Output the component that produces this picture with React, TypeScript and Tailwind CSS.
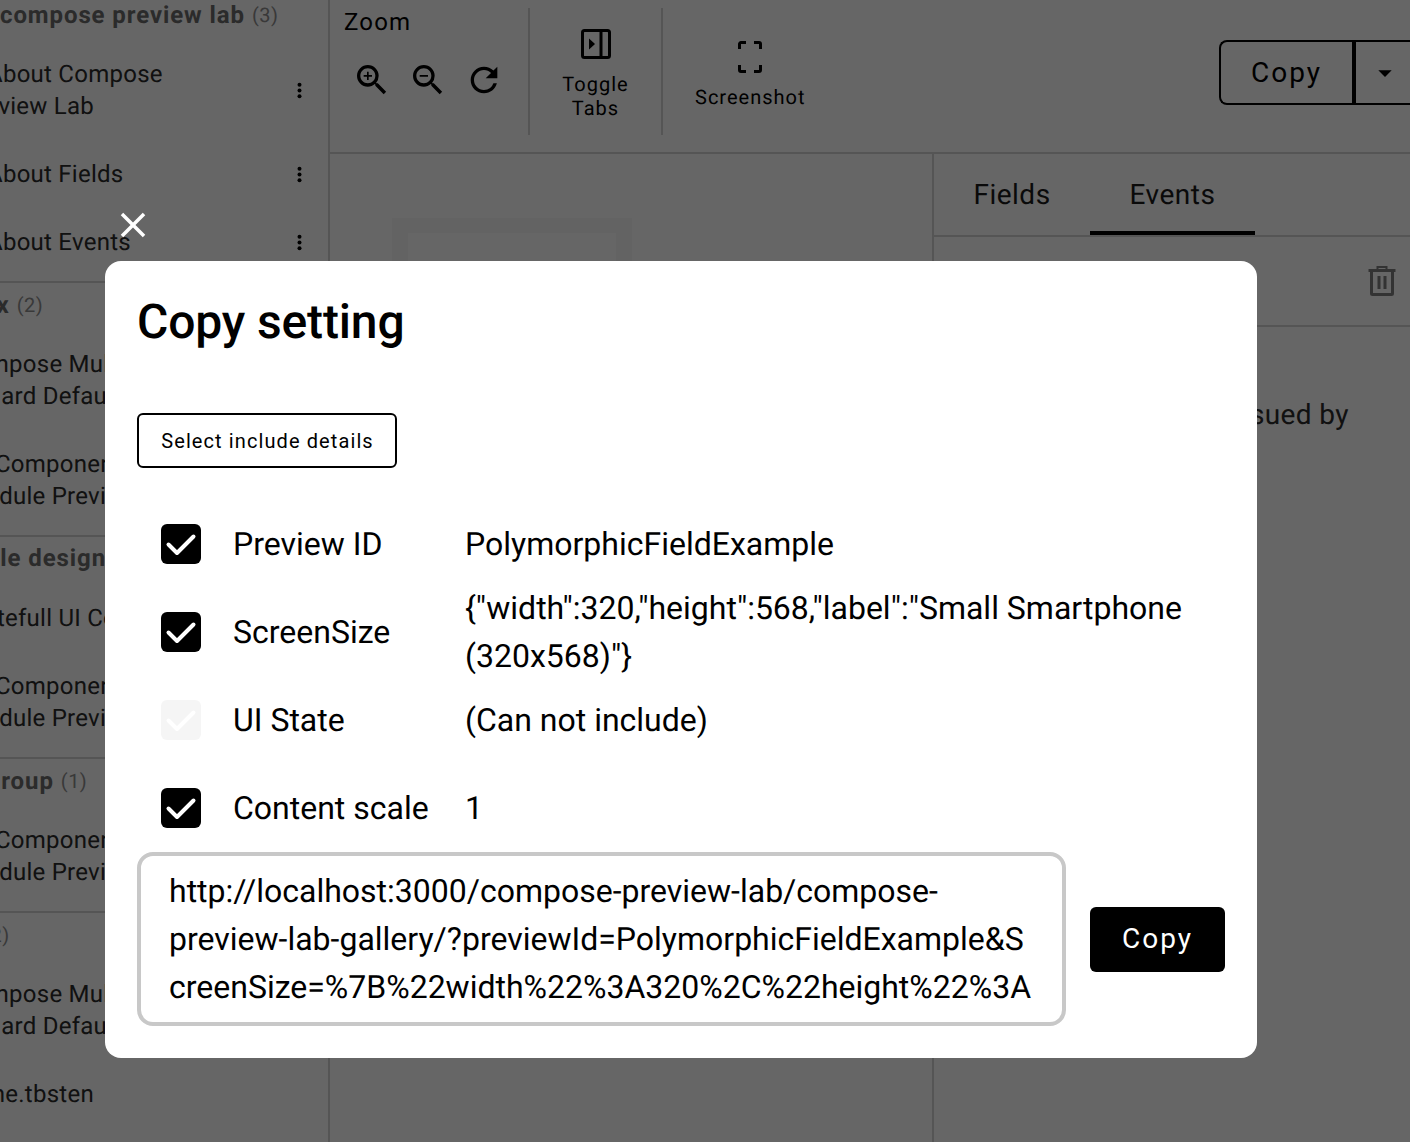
import { MdArrowDropDown, MdClose, MdRefresh, MdZoomIn, MdZoomOut } from "react-icons/md";

function Item({ lines, className, menu }: { lines: [string, string][]; className: string; menu?: boolean }) {
  return (
    <div className={`flex items-center justify-between pr-[26px] ${className}`}>
      <div className="text-[24px] leading-[32px] tracking-[0.25px] whitespace-nowrap text-[#2b2b2b]">
        {lines.map(([text, offset]) => (
          <div key={text} className={offset}>
            {text}
          </div>
        ))}
      </div>
      {menu && (
        <svg viewBox="0 0 6 20" className="h-[17px] w-[5px]" fill="#000">
          <circle cx="3" cy="3" r="2.4" />
          <circle cx="3" cy="10" r="2.4" />
          <circle cx="3" cy="17" r="2.4" />
        </svg>
      )}
    </div>
  );
}

function GroupTitle({ name, count, className }: { name: string; count: string; className: string }) {
  return (
    <div className={`flex items-center whitespace-nowrap ${className}`}>
      <span className="text-[24px] font-bold tracking-[0.9px] text-[#6b6b6b]">{name}</span>
      <span className="ml-[7px] text-[20px] tracking-[0.5px] text-[#8f8f8f]">{count}</span>
    </div>
  );
}

function Divider({ className }: { className: string }) {
  return <div className={`h-[2px] w-full bg-[#d5d5d5] ${className}`} />;
}

function Sidebar() {
  return (
    <aside className="h-full w-[330px] shrink-0 overflow-hidden border-r-2 border-[#d5d5d5]">
      <GroupTitle name="compose preview lab" count="(3)" className="h-[30px]" />
      <Item
        lines={[
          ["About Compose", "-ml-[13px]"],
          ["Preview Lab", "-ml-[38px]"],
        ]}
        className="mt-[28px] h-[64px]"
        menu
      />
      <Item lines={[["About Fields", "-ml-[13px]"]]} className="mt-[28px] h-[48px]" menu />
      <Item lines={[["About Events", "-ml-[13px]"]]} className="mt-[20px] h-[48px]" menu />
      <Divider className="mt-[15px]" />

      <GroupTitle name="box" count="(2)" className="-ml-[32px] h-[44px]" />
      <Item
        lines={[
          ["Compose Multiplatform", "-ml-[42px]"],
          ["Standard Default", "-ml-[62px]"],
        ]}
        className="mt-[21px] h-[64px]"
      />
      <Item
        lines={[
          ["Component in", "-ml-[5px]"],
          ["Module Preview", "-ml-[36px]"],
        ]}
        className="mt-[36px] h-[64px]"
      />
      <Divider className="mt-[23px]" />

      <GroupTitle name="Example design" count="(2)" className="-ml-[77px] h-[42px]" />
      <Item lines={[["Statefull UI Component", "-ml-[39px]"]]} className="mt-[15px] h-[48px]" />
      <Item
        lines={[
          ["Component in", "-ml-[5px]"],
          ["Module Preview", "-ml-[36px]"],
        ]}
        className="mt-[28px] h-[64px]"
      />
      <Divider className="mt-[23px]" />

      <GroupTitle name="Group" count="(1)" className="-ml-[16px] h-[44px]" />
      <Item
        lines={[
          ["Component in", "-ml-[5px]"],
          ["Module Preview", "-ml-[36px]"],
        ]}
        className="mt-[21px] h-[64px]"
      />
      <Divider className="mt-[23px]" />

      <GroupTitle name="core" count="(2)" className="-ml-[75px] h-[44px]" />
      <Item
        lines={[
          ["Compose Multiplatform", "-ml-[42px]"],
          ["Standard Default", "-ml-[62px]"],
        ]}
        className="mt-[21px] h-[64px]"
      />
      <Item lines={[["me.tbsten", "-ml-[16px]"]]} className="mt-[28px] h-[48px]" />
    </aside>
  );
}

function Toolbar() {
  return (
    <div className="flex h-[154px] shrink-0 overflow-hidden border-b-2 border-[#d5d5d5] text-black">
      <div className="w-[198px] shrink-0 pl-[14px] pt-[8px]">
        <div className="text-[24px] leading-[28px] tracking-[1.2px]">Zoom</div>
        <div className="mt-[24px] ml-[8px] flex gap-4">
          <MdZoomIn className="h-10 w-10" />
          <MdZoomOut className="h-10 w-10" />
          <MdRefresh className="h-10 w-10" />
        </div>
      </div>
      <div className="mt-2 h-[127px] w-[2px] shrink-0 bg-[#d5d5d5]" />
      <div className="flex w-[131px] shrink-0 flex-col items-center pt-[29px] text-center text-[20px] leading-[24px] tracking-[1px]">
        <svg viewBox="0 0 30 30" className="h-[30px] w-[30px]" fill="none" stroke="#000" strokeWidth="3">
          <rect x="1.5" y="1.5" width="27" height="27" rx="2" />
          <path d="M20 1.5v27" />
          <path d="M8 9.5l6 5.5-6 5.500z" fill="#000" stroke="none" />
        </svg>
        <div className="mt-[13px]">Toggle</div>
        <div>Tabs</div>
      </div>
      <div className="mt-2 h-[127px] w-[2px] shrink-0 bg-[#d5d5d5]" />
      <div className="ml-[32px] flex shrink-0 flex-col items-center pt-[41px] text-[20px] leading-[24px] tracking-[1px]">
        <svg viewBox="0 0 24 32" className="h-[32px] w-[24px]" fill="none" stroke="#000" strokeWidth="3">
          <path d="M1.5 8V3a1.5 1.5 0 0 1 1.5-1.5h5M16 1.5h5A1.5 1.5 0 0 1 22.5 3v5M22.5 24v5a1.5 1.5 0 0 1-1.5 1.5h-5M8 30.5H3A1.5 1.5 0 0 1 1.5 29v-5" />
        </svg>
        <div className="mt-[12px]">Screenshot</div>
      </div>
      <div className="-mr-[6px] mt-[40px] ml-auto flex h-[65px] shrink-0">
        <button className="flex w-[133px] items-center justify-center rounded-l-[8px] border-2 border-r-0 border-black text-[28px] tracking-[2px]">
          Copy
        </button>
        <button className="flex w-[64px] items-center justify-center border-2 border-l-4 border-black">
          <MdArrowDropDown className="h-8 w-8" />
        </button>
      </div>
    </div>
  );
}

function EventsPanel() {
  return (
    <div className="w-[478px] shrink-0 border-l-2 border-[#d5d5d5]">
      <div className="flex h-[83px] border-b-2 border-[#d5d5d5] text-[28px] tracking-[0.5px] text-[#1a1a1a]">
        <div className="flex w-[156px] items-center justify-center pt-[1px]">Fields</div>
        <div className="flex w-[165px] items-center justify-center border-b-4 border-black pt-[5px]">Events</div>
      </div>
      <div className="flex h-[90px] items-center justify-end border-b-2 border-[#d5d5d5] pr-[14px]">
        <svg viewBox="0 0 28 30" className="h-[30px] w-[28px]" fill="none" stroke="#808080" strokeWidth="3">
          <path d="M0.5 4.500h27" />
          <path d="M9.500 3V1h9v2" strokeWidth="2" />
          <path d="M3.500 5v22.500a1 1 0 0 0 1 1h19a1 1 0 0 0 1-1V5" />
          <path d="M11 10v13M17 10v13" />
        </svg>
      </div>
      <div className="mt-[70px] flex justify-end pr-[61px] text-[28px] leading-[36px] tracking-[0.4px] whitespace-nowrap text-[#2b2b2b]">
        No events have been issued by
      </div>
    </div>
  );
}

function Check({ disabled }: { disabled?: boolean }) {
  return (
    <div className={`h-10 w-10 shrink-0 rounded-[6px] ${disabled ? "bg-[#f5f5f5]" : "bg-black"}`}>
      <svg viewBox="0 0 40 40" className="h-10 w-10" fill="none" stroke="#fff" strokeWidth="4" strokeLinecap="round" strokeLinejoin="round">
        <path d="M7.500 20.500l8.500 8.500L32.500 12.500" />
      </svg>
    </div>
  );
}

function Row({ label, value, disabled }: { label: string; value: React.ReactNode; disabled?: boolean }) {
  return (
    <div className="flex h-[88px] items-center pl-6">
      <Check disabled={disabled} />
      <div className="ml-8 w-[232px] shrink-0">{label}</div>
      <div className="w-[730px]">{value}</div>
    </div>
  );
}

export default function App() {
  return (
    <div className="relative h-[1142px] w-[1410px] overflow-hidden bg-white font-['Roboto',sans-serif] [text-rendering:geometricPrecision]">
      <div className="flex h-full">
        <Sidebar />
        <main className="flex min-w-0 flex-1 flex-col">
          <Toolbar />
          <div className="flex min-h-0 flex-1">
            <div className="flex-1 pt-[64px] pl-[62px]">
              <div className="h-[700px] w-[240px] border-[16px] border-t-[15px] border-[#f7f7f7]" />
            </div>
            <EventsPanel />
          </div>
        </main>
      </div>

      {/* Overlay */}
      <div className="fixed inset-0 bg-black/60" />
      <button className="fixed left-[112px] top-[204px] text-white">
        <MdClose className="h-[42px] w-[42px]" />
      </button>

      <div className="fixed left-[105px] top-[261px] h-[797px] w-[1152px] rounded-[16px] bg-white px-8 text-[32px] leading-[48px] text-black">
        <h2 className="mt-[37px] text-[48px] leading-[48px] font-medium tracking-[-0.15px]">Copy setting</h2>
        <button className="mt-[67px] flex h-[55px] w-[260px] items-center justify-center rounded-[6px] border-2 border-black pl-px text-[20px] tracking-[1.1px]">
          Select include details
        </button>
        <div className="mt-[32px]">
          <Row label="Preview ID" value="PolymorphicFieldExample" />
          <Row label="ScreenSize" value={'{"width":320,"height":568,"label":"Small Smartphone (320x568)"}'} />
          <Row label="UI State" value="(Can not include)" disabled />
          <Row label="Content scale" value="1" />
        </div>
        <div className="flex items-center gap-6">
          <div className="h-[174px] w-[929px] overflow-hidden rounded-[16px] border-4 border-[#c8c8c8] px-7 py-[11px] break-all">
            http://localhost:3000/compose-preview-lab/compose-
            <br />
            preview-lab-gallery/?previewId=PolymorphicFieldExample&amp;S
            <br />
            creenSize=%7B%22width%22%3A320%2C%22height%22%3A
          </div>
          <button className="flex h-[65px] w-[135px] items-center justify-center rounded-[6px] bg-black text-[28px] tracking-[2px] text-white">
            Copy
          </button>
        </div>
      </div>
    </div>
  );
}
